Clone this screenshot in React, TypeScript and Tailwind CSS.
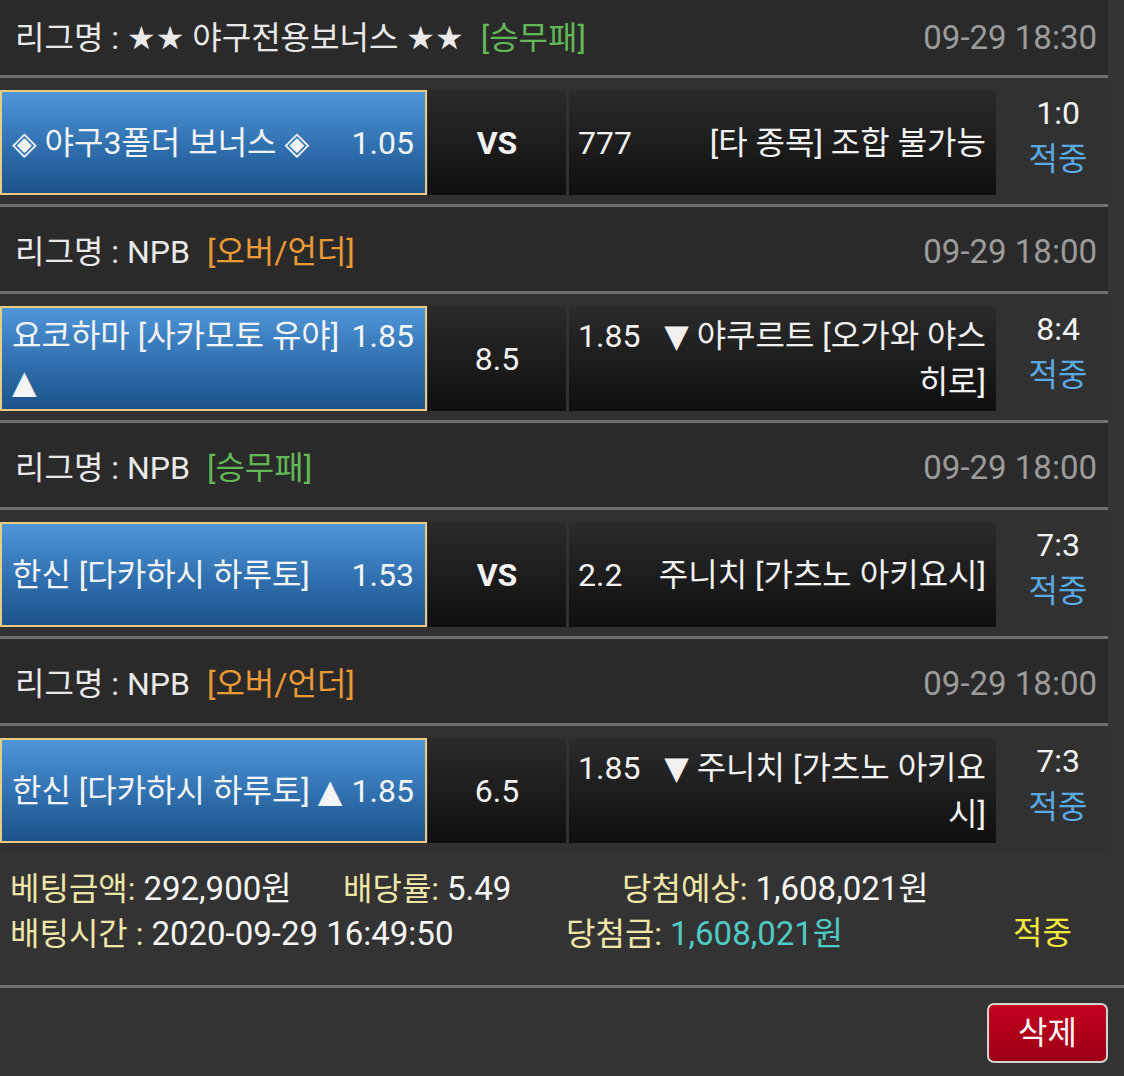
import React from "react";

const SYM = "font-['DejaVu_Sans',sans-serif]";
const NUM = "text-[33px]";

function Line() {
  return <div className="h-[3px] bg-[#6f6f6f]" />;
}

function Header({
  league,
  tag,
  tagColor,
  time,
  first,
}: {
  league: React.ReactNode;
  tag: string;
  tagColor: string;
  time: string;
  first?: boolean;
}) {
  return (
    <div
      className={
        "flex items-center justify-between bg-[#2a2a2a] pl-[15px] pr-[11px] " +
        (first ? "h-[75px]" : "h-[84px] pt-[5px]")
      }
    >
      <div className="flex items-center text-[#e9e9e9]">
        <span>{league}</span>
        <span className={"ml-[17px] " + tagColor}>{tag}</span>
      </div>
      <div className={"text-[#9c9c9c] " + NUM}>{time}</div>
    </div>
  );
}

function Row({
  left,
  mid,
  midBold,
  right,
  score,
}: {
  left: React.ReactNode;
  mid: string;
  midBold?: boolean;
  right: React.ReactNode;
  score: string;
}) {
  return (
    <div className="flex h-[126px] pt-[12px] pb-[9px] bg-[#313131]">
      <div className="w-[427px] h-[105px] border-2 border-[#e8cd80] bg-[linear-gradient(to_bottom,#4f96d9,#2f6fae_55%,#1d548a)] pl-[10px] pr-[11px] flex flex-col justify-center leading-[46px] text-[#f4f4f4]">
        {left}
      </div>
      <div className="ml-[1px] w-[138px] h-[105px] bg-[linear-gradient(to_bottom,#2b2b2b,#0f0f0f)] flex items-center justify-center text-[#f2f2f2]">
        <span className={midBold ? "font-bold" : ""}>{mid}</span>
      </div>
      <div className="ml-[3px] w-[427px] h-[105px] bg-[linear-gradient(to_bottom,#2b2b2b,#0f0f0f)] pl-[9px] pr-[10px] flex flex-col justify-center leading-[46px] text-[#f2f2f2]">
        {right}
      </div>
      <div className="flex-1 h-[105px] flex flex-col items-center justify-center pl-[12px] pb-[14px] leading-[46px]">
        <span className="text-[#f2f2f2]">{score}</span>
        <span className="text-[#5aa9e4]">적중</span>
      </div>
    </div>
  );
}

export default function App() {
  return (
    <div className="w-[1124px] h-[1076px] overflow-hidden bg-[#333333] font-['Roboto','Noto_Sans_CJK_KR',sans-serif] text-[32px] leading-[46px]">
      <div className="w-[1108px]">
        <Header
          first
          league={
            <>
              리그명 : <span className={SYM}>★★</span> 야구전용보너스{" "}
              <span className={SYM}>★★</span>
            </>
          }
          tag="[승무패]"
          tagColor="text-[#62b856]"
          time="09-29 18:30"
        />
        <Line />
        <Row
          left={
            <div className="flex justify-between">
              <span>
                <span className={SYM}>◈</span> 야구3폴더 보너스{" "}
                <span className={SYM}>◈</span>
              </span>
              <span>1.05</span>
            </div>
          }
          mid="VS"
          midBold
          right={
            <div className="flex justify-between">
              <span>777</span>
              <span>[타 종목] 조합 불가능</span>
            </div>
          }
          score="1:0"
        />
        <Line />
        <Header
          league="리그명 : NPB"
          tag="[오버/언더]"
          tagColor="text-[#ec9a36]"
          time="09-29 18:00"
        />
        <Line />
        <Row
          left={
            <>
              <div className="flex justify-between">
                <span>요코하마 [사카모토 유야]</span>
                <span>1.85</span>
              </div>
              <div>
                <span className={SYM}>▲</span>
              </div>
            </>
          }
          mid="8.5"
          right={
            <>
              <div className="flex justify-between">
                <span>1.85</span>
                <span>
                  <span className={SYM}>▼</span> 야쿠르트 [오가와 야스
                </span>
              </div>
              <div className="text-right">히로]</div>
            </>
          }
          score="8:4"
        />
        <Line />
        <Header
          league="리그명 : NPB"
          tag="[승무패]"
          tagColor="text-[#62b856]"
          time="09-29 18:00"
        />
        <Line />
        <Row
          left={
            <div className="flex justify-between">
              <span>한신 [다카하시 하루토]</span>
              <span>1.53</span>
            </div>
          }
          mid="VS"
          midBold
          right={
            <div className="flex justify-between">
              <span>2.2</span>
              <span>주니치 [가츠노 아키요시]</span>
            </div>
          }
          score="7:3"
        />
        <Line />
        <Header
          league="리그명 : NPB"
          tag="[오버/언더]"
          tagColor="text-[#ec9a36]"
          time="09-29 18:00"
        />
        <Line />
        <Row
          left={
            <div className="flex justify-between whitespace-nowrap">
              <span>
                한신 [다카하시 하루토] <span className={SYM}>▲</span>
              </span>
              <span>1.85</span>
            </div>
          }
          mid="6.5"
          right={
            <>
              <div className="flex justify-between">
                <span>1.85</span>
                <span>
                  <span className={SYM}>▼</span> 주니치 [가츠노 아키요
                </span>
              </div>
              <div className="text-right">시]</div>
            </>
          }
          score="7:3"
        />
      </div>

      <div className="pt-[14px] pl-[10px] leading-[45px] h-[133px]">
        <div className="flex h-[45px]">
          <span className="w-[333px]">
            <span className="text-[#efe6a8]">베팅금액:</span>{" "}
            <span className={"text-[#f5f5f5] " + NUM}>292,900원</span>
          </span>
          <span className="w-[279px]">
            <span className="text-[#efe6a8]">배당률:</span>{" "}
            <span className={"text-[#f5f5f5] " + NUM}>5.49</span>
          </span>
          <span>
            <span className="text-[#efe6a8]">당첨예상:</span>{" "}
            <span className={"text-[#f5f5f5] " + NUM}>1,608,021원</span>
          </span>
        </div>
        <div className="flex h-[45px]">
          <span className="w-[556px]">
            <span className="text-[#efe6a8]">배팅시간 :</span>{" "}
            <span className={"text-[#f5f5f5] " + NUM}>2020-09-29 16:49:50</span>
          </span>
          <span className="w-[447px]">
            <span className="text-[#efe6a8]">당첨금:</span>{" "}
            <span className={"text-[#4fcac6] " + NUM}>1,608,021원</span>
          </span>
          <span className="text-[#f3e63e]">적중</span>
        </div>
      </div>
      <div className="h-[3px] bg-[#6f6f6f]" />
      <div className="flex justify-end pr-[16px] pt-[15px]">
        <button className="w-[121px] h-[60px] rounded-[7px] border-2 border-[#d2d2d2] bg-[linear-gradient(to_bottom,#c4001d,#9c0016)] text-[#f8f8f8] text-[32px] leading-none flex items-center justify-center">
          삭제
        </button>
      </div>
    </div>
  );
}
